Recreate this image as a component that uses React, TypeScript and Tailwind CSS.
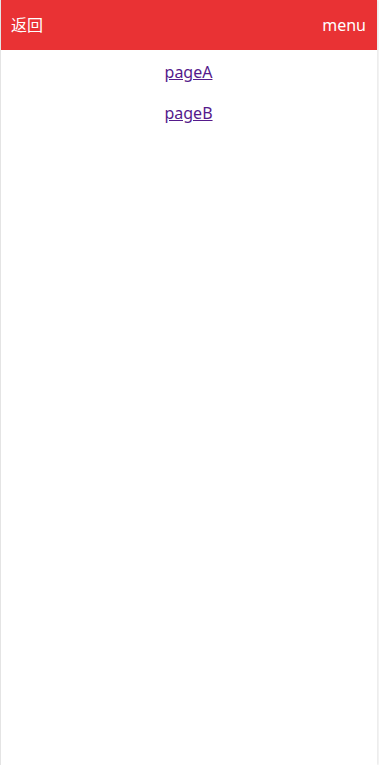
import React from 'react';

export default function App() {
  return (
    <div className="min-h-[765px] w-[379px] bg-white" style={{ fontFamily: '"Noto Sans", "Noto Sans CJK SC", sans-serif' }}>
      <div className="flex min-h-[765px] w-[377px] flex-col border-l border-[#e4e4e4] shadow-[2px_0_2px_rgba(0,0,0,0.08)]">
        {/* HEADER */}
        <div className="flex h-[50px] items-center justify-between bg-[#e93234] pl-[10px] pr-[11px] text-[16px] text-white">
          <span>返回</span>
          <span>menu</span>
        </div>

        {/* LINKS */}
        <div className="flex flex-col items-center gap-[19px] pt-[11px] pr-[1px] text-[16px] leading-[22px]">
          <a href="#" className="text-[#551a8b] underline">pageA</a>
          <a href="#" className="text-[#551a8b] underline">pageB</a>
        </div>
      </div>
    </div>
  );
}
